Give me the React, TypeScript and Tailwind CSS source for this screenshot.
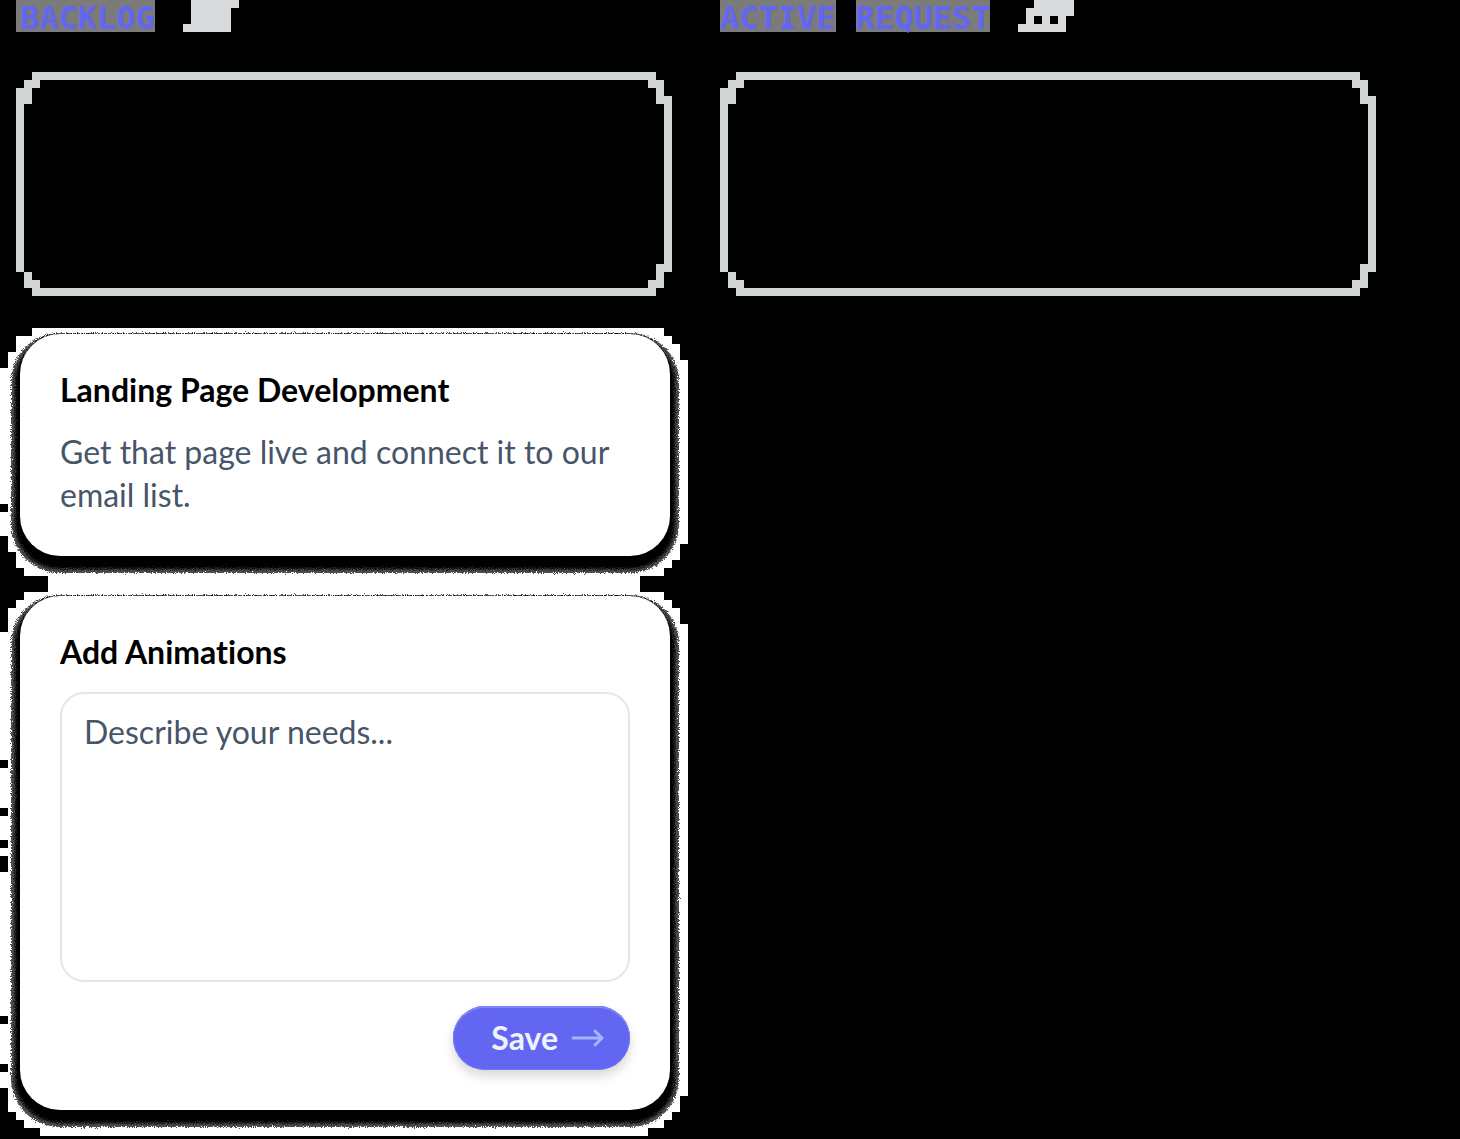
import type { ReactNode } from "react";

function Words({ text }: { text: string }) {
  return (
    <h2 className="flex gap-5 font-['DejaVu_Sans_Mono',monospace] text-[32px] leading-9 font-bold text-[#6366f1]">
      {text.split(" ").map((word) => (
        <span key={word} className="h-8 bg-[#7b7b79]">
          {word}
        </span>
      ))}
    </h2>
  );
}

function Column({ title, slashes, children }: { title: ReactNode; slashes: ReactNode; children?: ReactNode }) {
  return (
    <section className="min-w-0 flex-1">
      <header className="flex h-8 items-start gap-7">
        {title}
        <svg className="h-8 w-14 shrink-0" viewBox="0 0 56 32" fill="#d8dadb" shapeRendering="crispEdges" aria-hidden="true">
          {slashes}
        </svg>
      </header>
      <DropZone />
      {children}
    </section>
  );
}

/* Empty drop target with stepped corners */
function DropZone() {
  return (
    <div className="mt-10 h-56 bg-[#d2d5d6] p-2 [clip-path:polygon(16px_0,calc(100%_-_16px)_0,calc(100%_-_16px)_8px,calc(100%_-_8px)_8px,calc(100%_-_8px)_24px,100%_24px,100%_calc(100%_-_24px),calc(100%_-_8px)_calc(100%_-_24px),calc(100%_-_8px)_calc(100%_-_8px),calc(100%_-_16px)_calc(100%_-_8px),calc(100%_-_16px)_100%,16px_100%,16px_calc(100%_-_8px),8px_calc(100%_-_8px),8px_calc(100%_-_24px),0_calc(100%_-_24px),0_16px,8px_16px,8px_8px,16px_8px)]">
      <div className="h-full bg-black [clip-path:polygon(16px_0,calc(100%_-_16px)_0,calc(100%_-_16px)_8px,calc(100%_-_8px)_8px,calc(100%_-_8px)_24px,100%_24px,100%_calc(100%_-_24px),calc(100%_-_8px)_calc(100%_-_24px),calc(100%_-_8px)_calc(100%_-_8px),calc(100%_-_16px)_calc(100%_-_8px),calc(100%_-_16px)_100%,16px_100%,16px_calc(100%_-_8px),8px_calc(100%_-_8px),8px_calc(100%_-_16px),0_calc(100%_-_16px),0_24px,8px_24px,8px_8px,16px_8px)]" />
    </div>
  );
}

function Card({ children }: { children: ReactNode }) {
  return (
    <div className="relative isolate">
      <div
        aria-hidden="true"
        className="absolute inset-0 -z-10 rounded-[40px] bg-black shadow-[0_8px_2px_4px_#050505,0_8px_2px_6px_#222,0_8px_0_9px_#505050] [filter:url(#grain)]"
      />
      <div className="rounded-[40px] bg-white px-10 pt-9 pb-10">{children}</div>
    </div>
  );
}

export default function App() {
  return (
    <main className="min-h-screen overflow-hidden bg-black font-[Lato,sans-serif] text-[32px] [font-variant-ligatures:none]">
      <svg className="absolute size-0" aria-hidden="true">
        <filter id="grain" x="-5%" y="-10%" width="110%" height="120%">
          <feTurbulence type="fractalNoise" baseFrequency="0.9" numOctaves="2" seed="4" result="noise" />
          <feDisplacementMap in="SourceGraphic" in2="noise" scale="6" xChannelSelector="R" yChannelSelector="G" />
        </filter>
      </svg>
      <div className="flex items-start gap-12 pr-[84px] pl-4">
        <Column
          title={
            <div className="bg-[#7b7b79] pl-1">
              <Words text="BACKLOG" />
            </div>
          }
          slashes={<path d="M8 0H56V8H48V32H0V24H8Z" />}
        >
          <div className="-mx-4 mt-8">
            <article className="bg-white pt-[6px] pr-[18px] pb-7 pl-5 [clip-path:polygon(32px_0,calc(100%_-_24px)_0,calc(100%_-_24px)_8px,calc(100%_-_16px)_8px,calc(100%_-_16px)_16px,calc(100%_-_8px)_16px,calc(100%_-_8px)_32px,100%_32px,100%_216px,calc(100%_-_8px)_216px,calc(100%_-_8px)_232px,calc(100%_-_16px)_232px,calc(100%_-_16px)_240px,calc(100%_-_24px)_240px,calc(100%_-_24px)_248px,calc(100%_-_48px)_248px,calc(100%_-_48px)_100%,48px_100%,48px_248px,24px_248px,24px_240px,16px_240px,16px_224px,8px_224px,8px_208px,0_208px,0_184px,8px_184px,8px_176px,0_176px,0_40px,8px_40px,8px_24px,16px_24px,16px_8px,32px_8px)]">
              <Card>
                <h3 className="leading-10 font-bold text-black">Landing Page Development</h3>
                <p className="mt-5 leading-[43px] text-[#475569]">Get that page live and connect it to our email list.</p>
              </Card>
            </article>
            <article className="bg-white pt-3 pr-[18px] pb-[26px] pl-5 [clip-path:polygon(48px_0,calc(100%_-_48px)_0,calc(100%_-_48px)_8px,calc(100%_-_24px)_8px,calc(100%_-_24px)_16px,calc(100%_-_16px)_16px,calc(100%_-_16px)_24px,calc(100%_-_8px)_24px,calc(100%_-_8px)_40px,100%_40px,100%_calc(100%_-_40px),calc(100%_-_8px)_calc(100%_-_40px),calc(100%_-_8px)_calc(100%_-_24px),calc(100%_-_16px)_calc(100%_-_24px),calc(100%_-_16px)_calc(100%_-_16px),calc(100%_-_24px)_calc(100%_-_16px),calc(100%_-_24px)_calc(100%_-_8px),calc(100%_-_40px)_calc(100%_-_8px),calc(100%_-_40px)_100%,40px_100%,40px_calc(100%_-_8px),24px_calc(100%_-_8px),24px_calc(100%_-_16px),16px_calc(100%_-_16px),16px_calc(100%_-_24px),8px_calc(100%_-_24px),8px_calc(100%_-_48px),0_calc(100%_-_48px),0_488px,8px_488px,8px_480px,0_480px,0_440px,8px_440px,8px_432px,0_432px,0_288px,8px_288px,8px_272px,0_272px,0_264px,8px_264px,8px_256px,0_256px,0_232px,8px_232px,8px_224px,0_224px,0_184px,8px_184px,8px_176px,0_176px,0_48px,8px_48px,8px_24px,16px_24px,16px_16px,24px_16px,24px_8px,48px_8px)]">
              <Card>
                <form onSubmit={(event) => event.preventDefault()}>
                  <label htmlFor="needs" className="block leading-10 font-bold text-black">
                    Add Animations
                  </label>
                  <textarea
                    id="needs"
                    placeholder="Describe your needs..."
                    className="mt-5 block h-[290px] w-full resize-none rounded-3xl border-2 border-[#e4e6ef] bg-white px-[22px] py-4 leading-[43px] text-[#475569] outline-none placeholder:text-[#475569]"
                  />
                  <div className="mt-6 flex justify-end">
                    <button
                      type="submit"
                      className="flex h-16 items-center gap-3 rounded-full bg-[#6366f1] pr-6 pl-[38px] font-bold text-[#eef2ff] shadow-[inset_0_2px_0_#8385f4,inset_0_0_0_1px_#7476f3,0_6px_12px_rgba(0,0,0,0.16)]"
                    >
                      Save
                      <svg className="h-8 w-9" viewBox="0 0 36 32" fill="none" stroke="#a5b4fc" strokeWidth="3" strokeLinecap="round" strokeLinejoin="round" aria-hidden="true">
                        <path d="M3 16H32M25 9L32 16L25 23" />
                      </svg>
                    </button>
                  </div>
                </form>
              </Card>
            </article>
          </div>
        </Column>
        <Column
          title={<Words text="ACTIVE REQUEST" />}
          slashes={<path fillRule="evenodd" d="M16 0H56V16H48V32H0V24H8V8H16ZM16 16V24H24V16ZM32 16V24H40V16Z" />}
        />
      </div>
    </main>
  );
}
